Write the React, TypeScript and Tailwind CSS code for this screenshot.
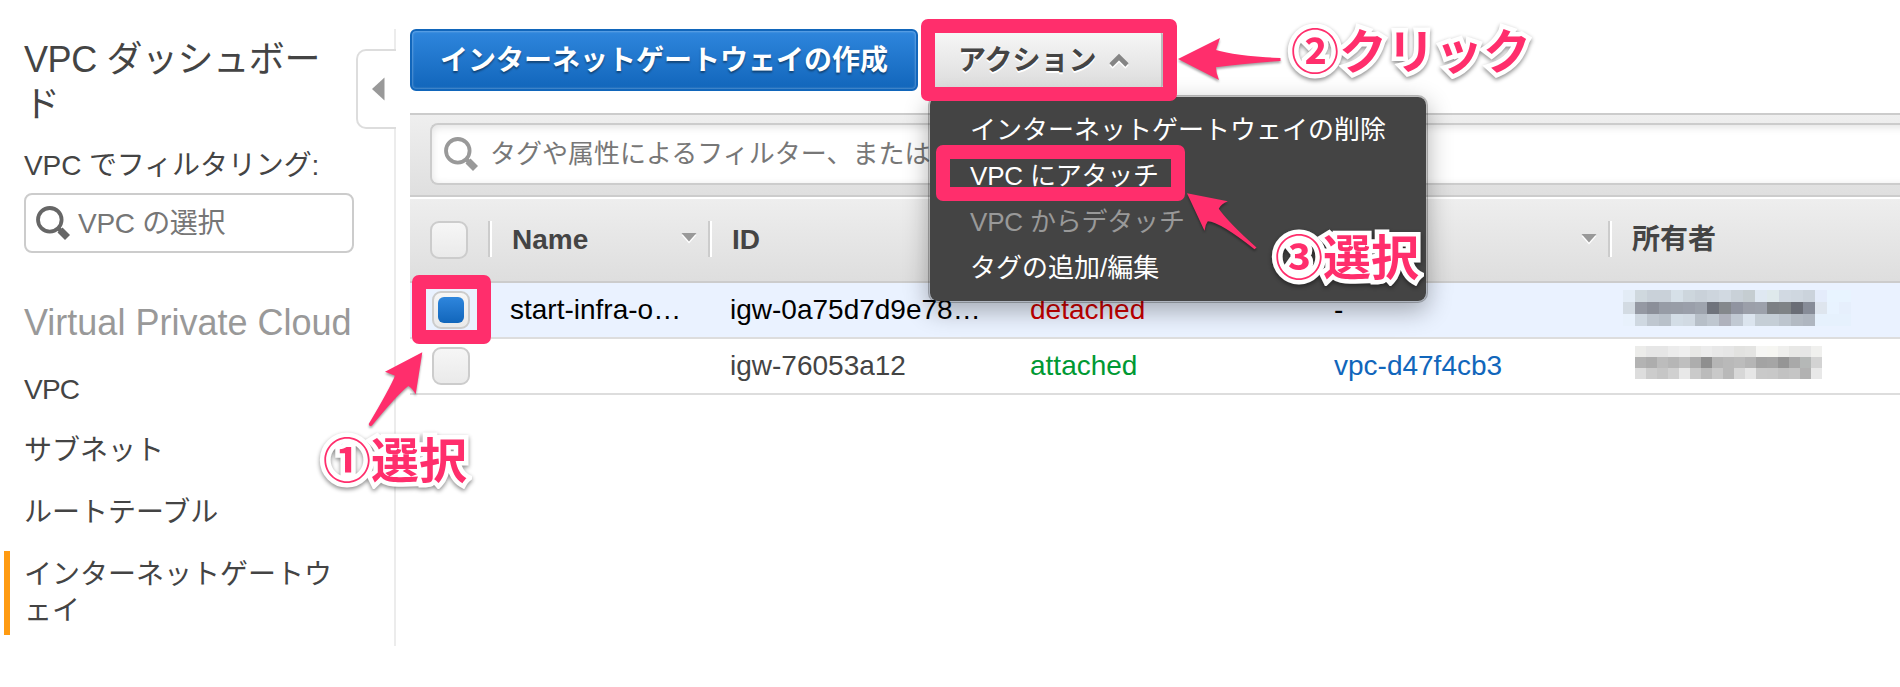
import type { ReactNode } from "react";

const MOSAIC_A = [
  ["#e3ecf6", "#cfd8de", "#c9d1d9", "#c9d1d9", "#d6e0e8", "#cdd6dd", "#c9d1d9", "#cdd5dd", "#d1d9e1", "#c9d1d8", "#c5cdd1", "#dfe8f2", "#dfe9ec", "#d1d9e2", "#cfd7e0", "#cbd3dc", "#e4ecfb", "#e8f4ff", "#e8f4ff"],
  ["#d3dbe3", "#9599a3", "#8b8f99", "#979ca6", "#989da7", "#9a9faa", "#9ea4ae", "#6f737c", "#84888c", "#9094a0", "#9b9fa9", "#9ca1ab", "#7c8084", "#7f8386", "#6a6d76", "#878c98", "#dee5ee", "#e8f3ff", "#e6effc"],
  ["#e8f1fc", "#cfd8e1", "#bfc7d0", "#b9c1ca", "#d3dde6", "#d1dae3", "#b7bfc8", "#bfc7d0", "#afb2bd", "#c1c9d3", "#dbe4ee", "#c5ced6", "#c5ced6", "#bdc5ce", "#b3bac3", "#afb6c0", "#e6f1fd", "#e6f1fd", "#e6f1fd"],
];

const MOSAIC_B = [
  ["#ececea", "#e6e6e6", "#e6e6e6", "#ececec", "#efefef", "#e8e8e6", "#ececec", "#e8e8e8", "#e6e6e6", "#e2e2e0", "#e4e4e2", "#f6f6f4", "#f6f6f2", "#efefed", "#e8e8e6", "#e6e6e6", "#f0f0ee"],
  ["#b3b3b3", "#adadad", "#bcbcbc", "#b6b6b6", "#bfbfbf", "#adadad", "#8f8f8f", "#b5b5b5", "#b9b9b9", "#bcbcbc", "#b5b5b5", "#a3a3a3", "#a5a5a5", "#959595", "#a9a9a9", "#b5b8b7", "#d3d3d3"],
  ["#dddddd", "#cccccc", "#c6c6c6", "#d0d0d0", "#e8e8e8", "#cacaca", "#bbbbbb", "#c9c9c9", "#b9b9b9", "#d7d7d7", "#e6e6e6", "#c9c9c9", "#c8c8c8", "#c2c2c2", "#c5c5c5", "#b2b2b2", "#e8e8e8"],
];

function Mosaic({ rows, cell }: { rows: string[][]; cell: string }) {
  return (
    <div className="flex flex-col">
      {rows.map((r, i) => (
        <div key={i} className="flex">
          {r.map((c, j) => (
            <div key={j} className={cell} style={{ backgroundColor: c }} />
          ))}
        </div>
      ))}
    </div>
  );
}

function SearchIcon({ color }: { color: string }) {
  return (
    <svg width="34" height="34" viewBox="0 0 34 34" className="shrink-0" fill="none" stroke={color}>
      <circle cx="13.8" cy="13.8" r="11.8" strokeWidth="3.8" />
      <path d="M21.5 21.5 L25 25" strokeWidth="4.5" />
      <path d="M24 24 L31.5 31.5" strokeWidth="7" />
    </svg>
  );
}

function Checkbox({ checked = false }: { checked?: boolean }) {
  return (
    <div className="flex h-[38px] w-[38px] items-center justify-center rounded-[9px] border-2 border-[#ccc] bg-linear-to-b from-[#f6f6f6] to-[#eaeaea]">
      {checked && <div className="h-[26px] w-[26px] rounded-[6px] bg-linear-to-b from-[#2e86dd] to-[#1166bb]" />}
    </div>
  );
}

function Divider() {
  return (
    <div className="flex h-9 w-1 shrink-0">
      <div className="w-0.5 bg-[#ccc]" />
      <div className="w-0.5 bg-white" />
    </div>
  );
}

function SortCaret() {
  return (
    <svg width="16" height="12" viewBox="0 0 16 12">
      <path d="M0.5 3 L8 11.5 L15.5 3 Z" fill="#fff" />
      <path d="M0.5 1 L15.5 1 L8 9.5 Z" fill="#999" />
    </svg>
  );
}

function Callout({ className, children }: { className: string; children: ReactNode }) {
  return (
    <div
      className={`absolute whitespace-nowrap text-[48px] leading-[60px] font-bold text-[#ff2e6c] [paint-order:stroke_fill] [-webkit-text-stroke:9px_white] drop-shadow-[0_2px_2px_rgba(0,0,0,0.45)] ${className}`}
    >
      {children}
    </div>
  );
}

function Sidebar() {
  return (
    <aside className="relative mt-[29px] h-[617px] w-[396px] shrink-0 border-r-2 border-[#ececec] text-[28px] text-[#444]">
      <h1 className="ml-6 mt-[8px] text-[36px] leading-[45px] tracking-[-0.4px]">
        VPC ダッシュボー
        <br />ド
      </h1>
      <div className="ml-6 mt-[21px] leading-9 tracking-[-0.1px]">VPC でフィルタリング:</div>
      <div className="ml-6 mt-[9px] flex h-[60px] w-[330px] items-center gap-2 rounded-lg border-2 border-[#ccc] pl-[10px] tracking-[-0.3px] text-[#767676]">
        <SearchIcon color="#666" />
        <span className="pt-0.5">VPC の選択</span>
      </div>
      <h2 className="ml-6 mt-[47px] text-[36px] leading-[45px] text-[#999]">Virtual Private Cloud</h2>
      <nav className="mt-[27px] leading-9">
        <div className="h-[61px] pl-6 tracking-[-0.8px]">VPC</div>
        <div className="h-[62px] pl-6">サブネット</div>
        <div className="h-[56px] pl-6">ルートテーブル</div>
        <div className="ml-1 h-[84px] border-l-6 border-[#ff9b12] pt-[6px] pl-[14px]">
          インターネットゲートウ
          <br />
          ェイ
        </div>
      </nav>
      <div className="absolute top-5 -right-0.5 flex h-[80px] w-10 items-center justify-center rounded-l-[10px] border-2 border-r-0 border-[#ddd] bg-white pl-0.5">
        <svg width="13" height="24" viewBox="0 0 13 24">
          <path d="M0 12 L12.5 0.5 V23.5 Z" fill="#999" />
        </svg>
      </div>
    </aside>
  );
}

function ActionMenu() {
  return (
    <div className="absolute top-[95px] left-[928px] h-[208px] w-[500px] rounded-[10px] border-2 border-black/25 bg-[#444] bg-clip-padding pt-[10px] pl-[40px] text-[26px] leading-[46px] text-white shadow-[0_8px_24px_rgba(0,0,0,0.3)]">
      <div>インターネットゲートウェイの削除</div>
      <div className="tracking-[-0.2px]">VPC にアタッチ</div>
      <div className="tracking-[-0.2px] text-[#999]">VPC からデタッチ</div>
      <div>タグの追加/編集</div>
    </div>
  );
}

function Main() {
  return (
    <main className="ml-[14px] flex min-w-0 flex-1 flex-col overflow-hidden text-[28px] text-[#444]">
      <div className="mt-[29px] flex h-[62px] gap-2 font-bold">
        <button className="h-[62px] w-[508px] rounded-[6px] border-2 border-[#1166bb] bg-linear-to-b from-[#2e86dd] to-[#1166bb] pt-0.5 leading-[56px] text-white shadow-[inset_0_0_2px_1px_rgba(255,255,255,0.25)] [text-shadow:0_2px_2px_rgba(0,0,0,0.4)]">
          インターネットゲートウェイの作成
        </button>
        <button className="flex h-[62px] w-[237px] items-center gap-3 rounded-[6px] border-2 border-[#bbb] bg-linear-to-b from-[#f7f7f7] to-[#dcdcdc] pt-0.5 pl-[30px] [text-shadow:0_2px_0_white]">
          アクション
          <svg width="20" height="16" viewBox="0 0 20 16" fill="none" strokeWidth="4.6">
            <path d="M2 14 L10 6 L18 14" stroke="#fff" />
            <path d="M2 12 L10 4 L18 12" stroke="#858585" />
          </svg>
        </button>
      </div>
      <div className="mt-[22px] h-[84px] border-y-2 border-[#ccc] bg-linear-to-b from-[#efefef] to-[#dfdfdf] pt-2 pl-5">
        <div className="-mr-6 flex h-[62px] items-center gap-[12px] rounded-l-[8px] border-2 border-r-0 border-[#ccc] bg-white pl-3 text-[26px] text-[#777] shadow-[inset_0_2px_8px_rgba(0,0,0,0.12)]">
          <SearchIcon color="#999" />
          <span>タグや属性によるフィルター、または</span>
        </div>
      </div>
      <div className="flex h-[86px] border-t-2 border-b-2 border-t-white border-b-[#ccc] bg-linear-to-b from-[#eeeeee] to-[#dedede] pt-[22px] leading-[38px] font-bold">
        <div className="w-[78px] pl-5">
          <Checkbox />
        </div>
        <Divider />
        <div className="flex w-[216px] justify-between pr-[11px] pl-5">
          Name
          <div className="pt-[11px]">
            <SortCaret />
          </div>
        </div>
        <Divider />
        <div className="w-[869px] pl-5">ID</div>
        <div className="w-[27px] pt-[12px]">
          <SortCaret />
        </div>
        <Divider />
        <div className="pl-5">所有者</div>
      </div>
      <div className="flex h-14 items-start border-b-2 border-[#ddd] bg-[#eaf2ff] pt-2 leading-[38px] text-black">
        <div className="w-[100px] pl-[22px]">
          <Checkbox checked />
        </div>
        <div className="w-[220px]">start-infra-o…</div>
        <div className="w-[300px]">igw-0a75d7d9e78…</div>
        <div className="w-[304px] text-[#cc0000]">detached</div>
        <div className="w-[289px]">-</div>
        <div className="-mt-[1px]">
          <Mosaic rows={MOSAIC_A} cell="h-3 w-3" />
        </div>
      </div>
      <div className="flex h-14 items-start border-b-2 border-[#ddd] pt-2 leading-[38px]">
        <div className="w-[100px] pl-[22px]">
          <Checkbox />
        </div>
        <div className="w-[220px]" />
        <div className="w-[300px]">igw-76053a12</div>
        <div className="w-[304px] text-[#009933]">attached</div>
        <div className="w-[301px] text-[#1166bb]">vpc-d47f4cb3</div>
        <div className="-mt-[1px]">
          <Mosaic rows={MOSAIC_B} cell="h-[11px] w-[11px]" />
        </div>
      </div>
    </main>
  );
}

function Annotations() {
  return (
    <>
      <div className="absolute top-[19px] left-[921px] h-[82px] w-[256px] rounded-[7px] border-14 border-[#ff2e6c]" />
      <div className="absolute top-[145px] left-[936px] h-[56px] w-[249px] rounded-[7px] border-14 border-[#ff2e6c]" />
      <div className="absolute top-[275px] left-[412px] h-[69px] w-[79px] rounded-[7px] border-14 border-[#ff2e6c]" />
      <svg
        className="absolute top-0 left-0 drop-shadow-[0_2px_1px_rgba(0,0,0,0.35)]"
        width="1900"
        height="687"
        viewBox="0 0 1900 687"
        fill="#ff2e6c"
      >
        <path d="M422.3 352.3 L385 371.7 L395 375.7 Q390 388 368.7 424 Q369 427 372 425.5 Q397 395 408.3 386 Q412 388 415.7 394.3 Z" />
        <path d="M1178 59 L1220 38 L1216 50 Q1235 56 1280.5 58 V61 Q1240 64 1216 67.3 Q1216 73 1219 80 Z" />
        <path d="M1187 193.3 L1227.8 201.3 Q1221 204 1218.8 208.7 Q1228 222 1256.5 247.5 L1254.5 249.3 Q1220 222 1207.8 221.3 Q1205 225 1204.5 230.7 Z" />
      </svg>
      <Callout className="top-[432px] left-[323px]">①選択</Callout>
      <Callout className="top-[23px] left-[1291px]">②クリック</Callout>
      <Callout className="top-[229px] left-[1275px]">③選択</Callout>
    </>
  );
}

export default function App() {
  return (
    <div className="relative flex h-[687px] w-[1900px] overflow-hidden bg-white font-['Liberation_Sans','Noto_Sans_CJK_JP',sans-serif]">
      <Sidebar />
      <Main />
      <ActionMenu />
      <Annotations />
    </div>
  );
}
